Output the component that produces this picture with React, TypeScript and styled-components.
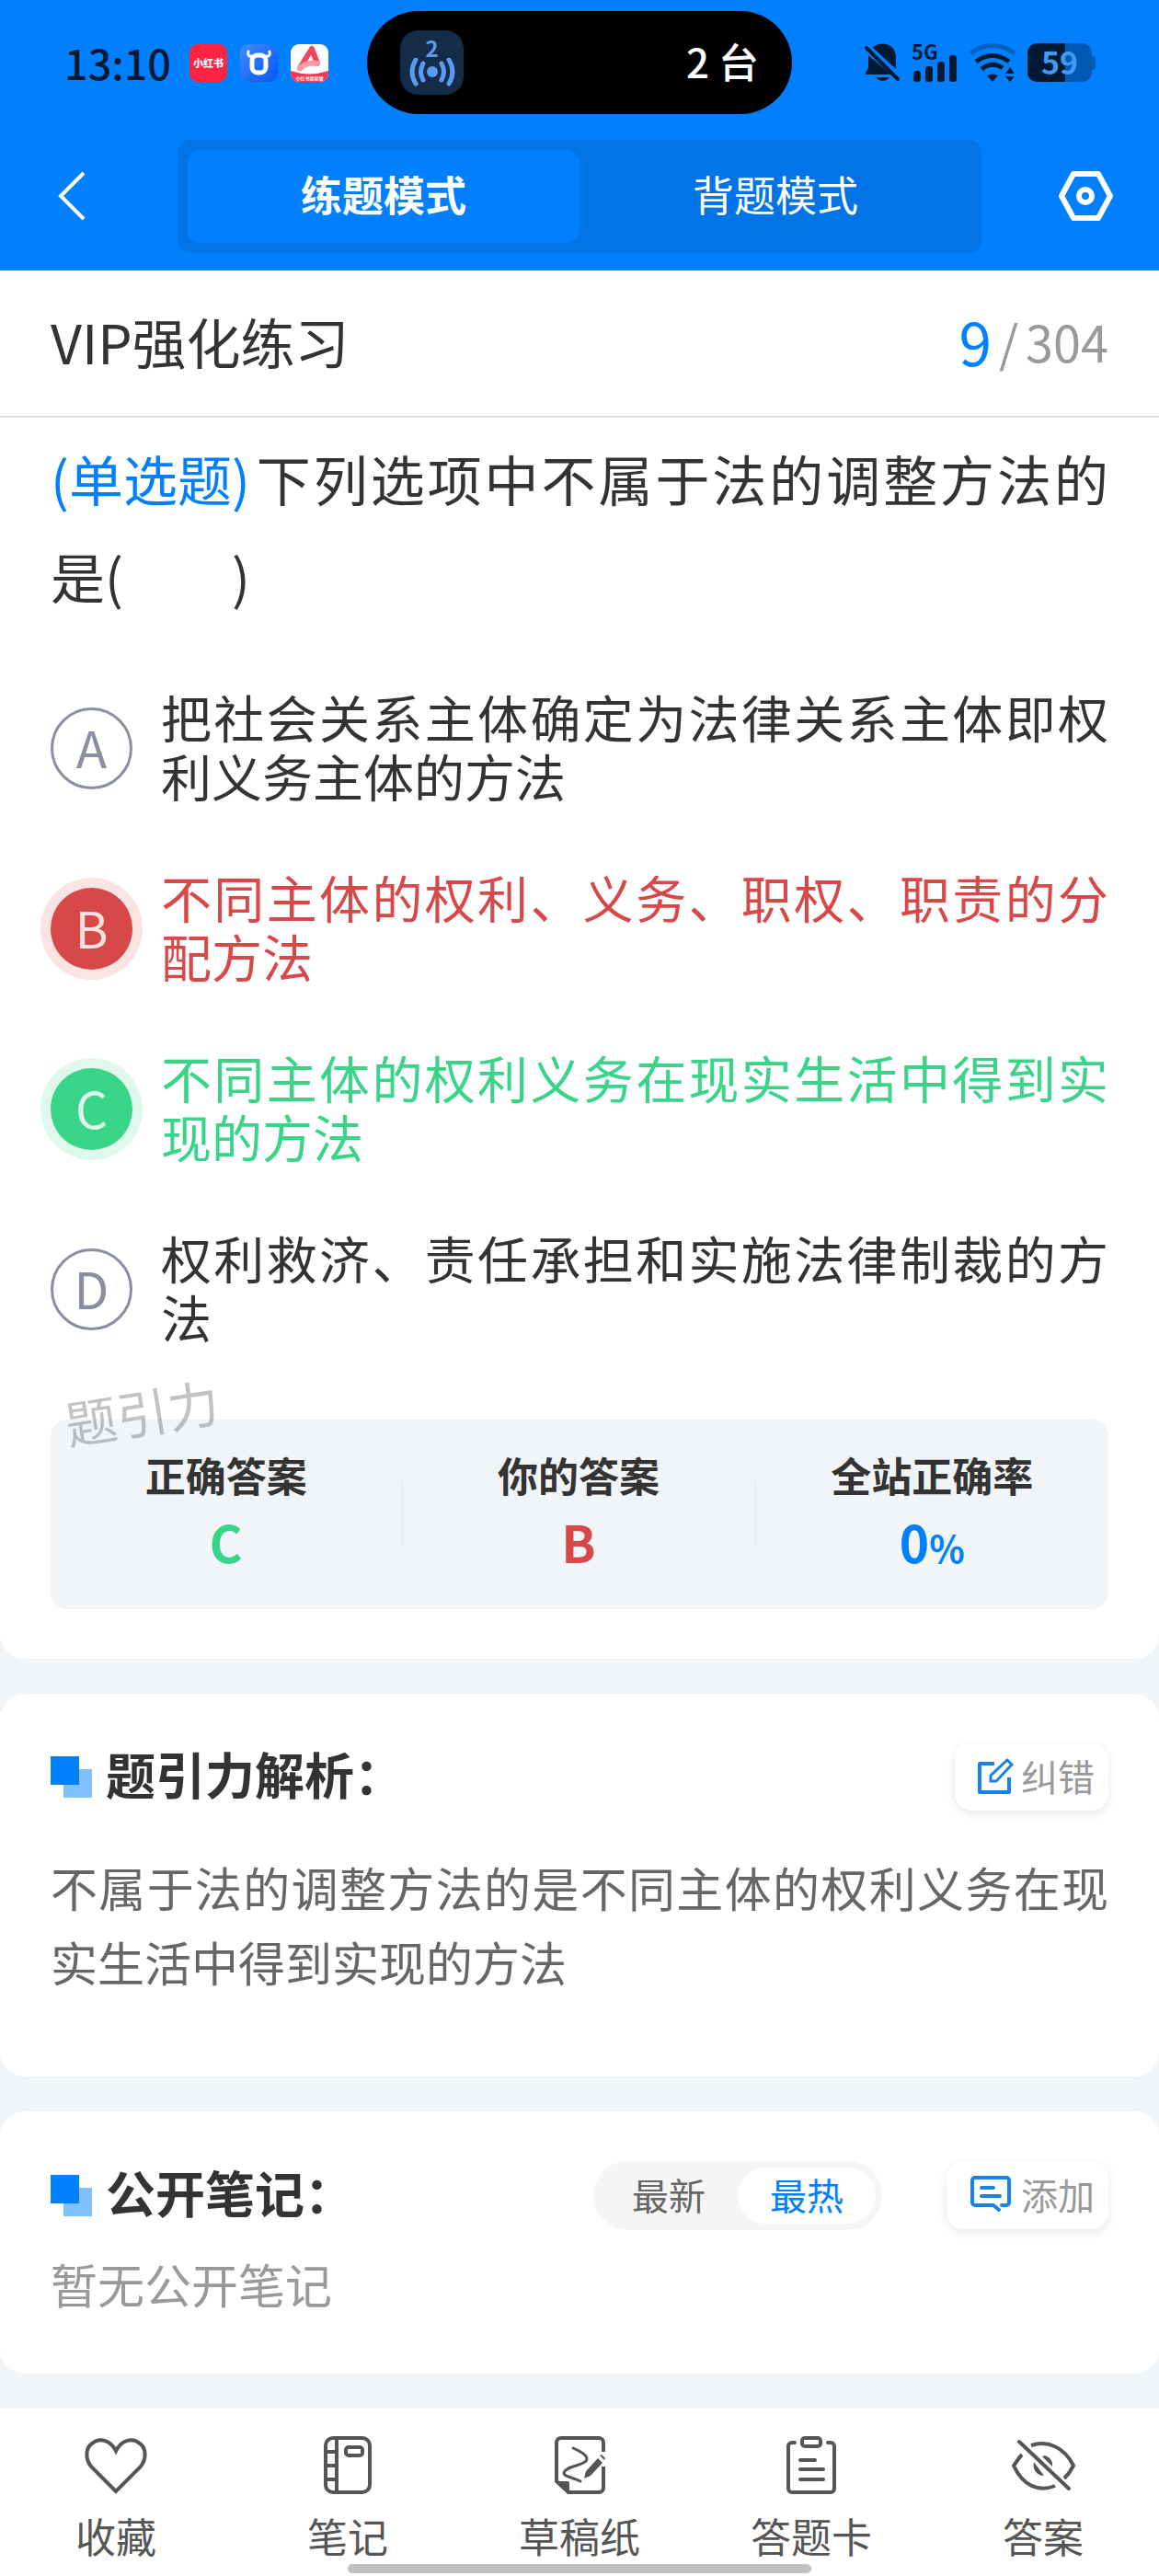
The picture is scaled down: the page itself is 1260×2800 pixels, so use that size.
import React, { useState } from "react";
import styled, { createGlobalStyle, css } from "styled-components";

const font = `"Noto Sans CJK SC", "Noto Sans", sans-serif`;
const blue = "#0080ff";
const red = "#d94848";
const green = "#38d488";
const ink = "#333333";
const panel = "#f1f5f8";

const GlobalStyle = createGlobalStyle`
  *, *::before, *::after { box-sizing: border-box; }
  body { margin: 0; background: ${panel}; font-family: ${font}; color: ${ink}; }
  button { font: inherit; color: inherit; border: 0; padding: 0; background: none; cursor: pointer; }
  h1, h2, p, dl, dd, dt, fieldset { margin: 0; padding: 0; border: 0; min-width: 0; }
  svg { display: block; flex: none; }
`;

const Page = styled.div`
  display: flex;
  flex-direction: column;
  min-height: 100vh;
`;

const Header = styled.header`
  background: ${blue};
  padding-bottom: 19px;
`;

const StatusBar = styled.div`
  display: grid;
  grid-template-columns: 1fr 462px 1fr;
  align-items: center;
  height: 136px;
  margin-bottom: 16px;
`;

const StatusLeft = styled.div`
  display: flex;
  align-items: center;
  gap: 14px;
  padding-left: 70px;
`;

const Clock = styled.time`
  font-size: 45px;
  line-height: 56px;
  font-weight: 500;
  color: #001a33;
  margin-right: 6px;
`;

const AppIcon = styled.span<{ $bg: string }>`
  display: flex;
  align-items: center;
  justify-content: center;
  width: 41px;
  height: 41px;
  border-radius: 9px;
  overflow: hidden;
  background: ${(p) => p.$bg};
  color: #fff;
  font-size: 11px;
  line-height: 16px;
  font-weight: 900;
  white-space: nowrap;
`;

const Island = styled.div`
  display: flex;
  align-items: center;
  justify-content: space-between;
  height: 112px;
  padding: 0 36px;
  border-radius: 56px;
  background: #000;
  color: #fff;
  font-size: 44px;
  line-height: 56px;
  font-weight: 500;
`;

const DeviceCount = styled.span`
  padding-bottom: 4px;
`;

const Hotspot = styled.span`
  display: flex;
  flex-direction: column;
  align-items: center;
  width: 69px;
  height: 70px;
  padding-top: 8px;
  border-radius: 20px;
  background: #152c48;
  color: #5a9bf2;
  font-size: 24px;
  line-height: 22px;
  font-weight: 700;
`;

const StatusRight = styled.div`
  display: flex;
  align-items: center;
  justify-content: flex-end;
  gap: 12px;
  padding-right: 69px;
`;

const Signal = styled.span`
  display: flex;
  flex-direction: column;
  width: 50px;
  height: 42px;
  color: #001a33;
  font-size: 22px;
  line-height: 16px;
  font-weight: 700;
`;

const Bars = styled.svg`
  margin-top: -4px;
`;

const Battery = styled.span`
  display: flex;
  align-items: center;
`;

const BatteryBody = styled.span`
  display: flex;
  align-items: center;
  justify-content: center;
  width: 70px;
  height: 42px;
  padding-bottom: 2px;
  border-radius: 10px;
  background: linear-gradient(90deg, #001a33 59%, #005ab3 59%);
  color: #3e99f7;
  font-size: 34px;
  line-height: 40px;
  font-weight: 700;
`;

const BatteryNub = styled.span`
  width: 4px;
  height: 15px;
  border-radius: 0 4px 4px 0;
  background: #005ab3;
`;

const TopNav = styled.nav`
  display: grid;
  grid-template-columns: 193px 1fr 193px;
  align-items: center;
`;

const IconButton = styled.button<{ $side: "left" | "right" }>`
  display: flex;
  justify-content: ${(p) => (p.$side === "left" ? "flex-start" : "flex-end")};
  padding: ${(p) => (p.$side === "left" ? "0 0 2px 60px" : "0 46px 2px 0")};
`;

const Segments = styled.div`
  display: flex;
  height: 123px;
  padding: 11px;
  border-radius: 14px;
  background: #0073e6;
`;

const Segment = styled.button<{ $active: boolean }>`
  flex: 1;
  padding-bottom: 6px;
  border-radius: 14px;
  color: #fff;
  font-size: 45px;
  line-height: 56px;
  ${(p) => p.$active && css`background: ${blue}; font-weight: 700;`}
`;

const TitleRow = styled.div`
  display: flex;
  align-items: center;
  justify-content: space-between;
  height: 160px;
  padding: 0 55px 6px;
  background: #fff;
  border-bottom: 2px solid #dcdcdc;
`;

const Title = styled.h1`
  font-size: 59px;
  line-height: 81px;
  font-weight: 400;
`;

const Progress = styled.p`
  display: flex;
  align-items: center;
  gap: 8px;
  font-size: 54px;
  line-height: 81px;
  color: #999;
`;

const Current = styled.span`
  font-size: 64px;
  color: ${blue};
`;

const Main = styled.main`
  display: flex;
  flex-direction: column;
  gap: 38px;
  flex: 1;
  padding-bottom: 38px;
`;

const Card = styled.section<{ $first?: boolean }>`
  padding: ${(p) => (p.$first ? "13px 55px 54px" : "54px 55px 55px")};
  border-radius: ${(p) => (p.$first ? "0 0 27px 27px" : "27px")};
  background: #fff;
`;

const Question = styled.p`
  font-size: 59px;
  line-height: 106px;
  text-align: justify;
`;

const Kind = styled.span`
  display: inline-block;
  margin-right: 4px;
  color: ${blue};
`;

const Options = styled.fieldset`
  display: flex;
  flex-direction: column;
  gap: 62px;
  margin: 67px 0 75px;
`;

type Tone = "plain" | "wrong" | "right";
const toneColor: Record<Tone, string> = { plain: ink, wrong: red, right: green };

const Option = styled.label<{ $tone: Tone }>`
  display: flex;
  align-items: center;
  gap: 31px;
  color: ${(p) => toneColor[p.$tone]};
  font-size: 55px;
  line-height: 64px;
  cursor: pointer;
`;

const Radio = styled.input`
  position: absolute;
  opacity: 0;
`;

const Letter = styled.span<{ $tone: Tone }>`
  flex: none;
  width: 89px;
  height: 89px;
  border-radius: 50%;
  text-align: center;
  line-height: 85px;
  ${(p) =>
    p.$tone === "plain"
      ? css`border: 3px solid #8a8fa0; color: #8a8fa0; line-height: 79px;`
      : css`
          background: ${toneColor[p.$tone]};
          color: ${p.$tone === "wrong" ? "#fbe0e0" : "#dcf8ea"};
          box-shadow: 0 0 0 11px ${p.$tone === "wrong" ? "#fae3e3" : "#e0f8ec"};
        `}
`;

const OptionText = styled.span`
  flex: 1;
  padding-bottom: 6px;
  text-align: justify;
`;

const ResultWrap = styled.div`
  position: relative;
`;

const Watermark = styled.span`
  position: absolute;
  left: 15px;
  top: -50px;
  font-size: 56px;
  line-height: 81px;
  color: rgba(120, 120, 120, 0.45);
  transform: rotate(-9deg);
  pointer-events: none;
`;

const Results = styled.dl`
  display: grid;
  grid-template-columns: repeat(3, 1fr);
  align-items: center;
  height: 206px;
  border-radius: 18px;
  background: ${panel};
`;

const Result = styled.div`
  display: flex;
  flex-direction: column;
  align-items: center;
  justify-content: center;
  height: 73px;
  font-weight: 700;
  &:not(:last-child) { border-right: 2px solid #e9edf0; }
`;

const ResultLabel = styled.dt`
  font-size: 44px;
  line-height: 64px;
`;

const ResultValue = styled.dd<{ $color: string }>`
  padding-bottom: 5px;
  font-size: 55px;
  line-height: 81px;
  color: ${(p) => p.$color};
`;

const Percent = styled.small`
  font-size: 40px;
  line-height: 40px;
`;

const CardHead = styled.div`
  display: flex;
  align-items: center;
  min-height: 73px;
`;

const Squares = styled.span`
  width: 45px;
  height: 45px;
  margin-right: 15px;
  background:
    linear-gradient(${blue}, ${blue}) 0 0 / 31px 31px no-repeat,
    linear-gradient(#80bfff, #80bfff) 100% 100% / 31px 31px no-repeat;
`;

const CardTitle = styled.h2`
  flex: 1;
  padding-bottom: 8px;
  font-size: 54px;
  line-height: 64px;
  font-weight: 700;
`;

const SmallButton = styled.button`
  display: flex;
  align-items: center;
  gap: 8px;
  height: 73px;
  padding: 0 15px 4px 25px;
  border-radius: 18px;
  background: #fff;
  box-shadow: 0 3px 11px rgba(0, 0, 0, 0.1);
  color: #999;
  font-size: 40px;
  line-height: 56px;
`;

const SortToggle = styled.div`
  display: flex;
  height: 75px;
  margin-right: 70px;
  padding: 7px;
  border-radius: 38px;
  background: #f5f5f5;
`;

const SortButton = styled.button<{ $active: boolean }>`
  width: 150px;
  padding-bottom: 4px;
  border-radius: 31px;
  background: ${(p) => (p.$active ? "#fff" : "transparent")};
  color: ${(p) => (p.$active ? blue : "#666")};
  font-size: 40px;
  line-height: 56px;
`;

const Explanation = styled.p`
  padding: 43px 0 29px;
  font-size: 51px;
  line-height: 81px;
  color: #666;
  text-align: justify;
`;

const Empty = styled.p`
  padding: 18px 0 2px;
  font-size: 51px;
  line-height: 81px;
  color: #999;
`;

const TabBar = styled.nav`
  display: grid;
  grid-template-columns: repeat(5, 1fr);
  height: 182px;
  background: #fff;
`;

const Tab = styled.button`
  display: flex;
  flex-direction: column;
  align-items: center;
  gap: 14px;
  padding-top: 26px;
  color: #555;
  font-size: 44px;
  line-height: 56px;
`;

const HomeIndicator = styled.span`
  position: absolute;
  left: 30%;
  right: 30%;
  bottom: 3px;
  height: 10px;
  border-radius: 5px;
  background: #c2c2c2;
`;

const Footer = styled.footer`
  position: relative;
`;

const line = { fill: "none", stroke: "currentColor", strokeWidth: 4, strokeLinecap: "round", strokeLinejoin: "round" } as const;

const HeartIcon = () => (
  <svg width="70" height="70" viewBox="0 0 70 70" {...line} strokeLinecap="butt">
    <path d="M35 64 9 38C1 29 2 17 9 12c8-7 20-4 26 8 6-12 18-15 26-8 7 5 8 17 0 26Z" strokeLinejoin="miter" />
  </svg>
);

const NotebookIcon = () => (
  <svg width="70" height="70" viewBox="0 0 70 70" {...line} strokeLinecap="butt">
    <rect x="11" y="6" width="48" height="59" rx="8" />
    <path d="M23 6v59M11 21h12M11 36h12M11 51h12" />
    <rect x="33" y="16" width="18" height="9" rx="3" />
  </svg>
);

const DraftIcon = () => (
  <svg width="70" height="70" viewBox="0 0 70 70" {...line}>
    <path d="M61 21V11a5 5 0 0 0-5-5H15a5 5 0 0 0-5 5v42l13 12h33a5 5 0 0 0 5-5V37" strokeLinecap="butt" />
    <path d="M9 53h13q2 0 2 2v11h-2L9 54Z" fill="currentColor" stroke="none" />
    <path d="M28 17c9 4 18 9 14 14s-23 6-24 13c0 4 10 5 18 9" strokeWidth="3" />
    <path d="m55 28 5 5-13 14-7 3 2-8Z" fill="currentColor" stroke="none" />
    <path d="m57 25 2-1 4 4-1 2Z" fill="currentColor" stroke="none" />
  </svg>
);

const ClipboardIcon = () => (
  <svg width="70" height="70" viewBox="0 0 70 70" {...line}>
    <path d="M17 11h-3a4 4 0 0 0-4 4v46a4 4 0 0 0 4 4h42a4 4 0 0 0 4-4V15a4 4 0 0 0-4-4h-3" />
    <rect x="25" y="6" width="20" height="9" rx="3" />
    <path d="M23 30h16M23 40h25M23 51h25" />
  </svg>
);

const EyeOffIcon = () => (
  <svg width="70" height="70" viewBox="0 0 70 70" {...line} strokeLinecap="butt">
    <path d="M22 14c18-6 36 2 46 22-3 6-6 10-10 14M12 24c-3 3-5 7-9 12 10 22 27 29 45 22" />
    <path d="M37 25c6 2 9 7 8 12L34 26ZM25 32c-2 8 3 15 11 15Z" fill="currentColor" stroke="none" />
    <path d="M9 10 63 61" strokeLinecap="round" />
  </svg>
);

const EditIcon = () => (
  <svg width="39" height="40" viewBox="0 0 39 40" fill="none" stroke="#1a80ea" strokeWidth="4">
    <path d="M18 7H2v31h32V22" strokeLinejoin="round" />
    <path d="m32 3 5 5-17 18h-6v-6Z" strokeWidth="3" />
  </svg>
);

const NoteIcon = () => (
  <svg width="48" height="40" viewBox="0 0 48 40" fill="none" stroke="#1a80ea" strokeWidth="4" strokeLinecap="round" strokeLinejoin="round">
    <path d="m32 37-6-5H6a3 3 0 0 1-3-3V5a3 3 0 0 1 3-3h34a3 3 0 0 1 3 3v24a3 3 0 0 1-3 3h-5" />
    <path d="M13 13h13M13 22h20" />
  </svg>
);

const tabs = [
  { label: "收藏", Icon: HeartIcon },
  { label: "笔记", Icon: NotebookIcon },
  { label: "草稿纸", Icon: DraftIcon },
  { label: "答题卡", Icon: ClipboardIcon },
  { label: "答案", Icon: EyeOffIcon },
];

const options: { key: string; tone: Tone; text: string }[] = [
  { key: "A", tone: "plain", text: "把社会关系主体确定为法律关系主体即权利义务主体的方法" },
  { key: "B", tone: "wrong", text: "不同主体的权利、义务、职权、职责的分配方法" },
  { key: "C", tone: "right", text: "不同主体的权利义务在现实生活中得到实现的方法" },
  { key: "D", tone: "plain", text: "权利救济、责任承担和实施法律制裁的方法" },
];

const modes = ["练题模式", "背题模式"];
const sorts = ["最新", "最热"];

export default function App() {
  const [mode, setMode] = useState(0);
  const [sort, setSort] = useState(1);

  return (
    <Page lang="zh-CN">
      <GlobalStyle />
      <Header>
        <StatusBar>
          <StatusLeft>
            <Clock>13:10</Clock>
            <AppIcon $bg="#ff2442">小红书</AppIcon>
            <AppIcon $bg="linear-gradient(135deg, #3f8bff, #0a55f0)">
              <svg width="41" height="41" viewBox="0 0 41 41" fill="none" stroke="#fff">
                <rect x="13" y="12" width="15" height="19" rx="6" strokeWidth="5" />
                <path d="M13 13c-4 1-5-2-4-5M28 13c4 1 5-2 4-5" strokeWidth="3" strokeLinecap="round" />
              </svg>
            </AppIcon>
            <AppIcon $bg="#fff">
              <svg width="41" height="41" viewBox="0 0 41 41" fill="none">
                <path d="M0 29q20 7 41 0v12H0Z" fill="#f5364f" />
                <path d="M10 26 23 5l6 16" stroke="#f2455a" strokeWidth="6" strokeLinecap="round" strokeLinejoin="round" />
                <path d="M10 26q8-7 19-5" stroke="#ff9aa2" strokeWidth="6" strokeLinecap="round" />
                <text x="20.5" y="39" textAnchor="middle" fontSize="5" fontWeight="700" fill="#fff">小红书商家版</text>
              </svg>
            </AppIcon>
          </StatusLeft>
          <Island>
            <Hotspot>
              2
              <svg width="50" height="32" viewBox="0 0 50 32" fill="none" stroke="currentColor" strokeWidth="5" strokeLinecap="round">
                <circle cx="25" cy="15" r="6" fill="currentColor" stroke="none" />
                <path d="M15 6q-5 9 0 18M7 2q-8 13 0 26M35 6q5 9 0 18M43 2q8 13 0 26" />
              </svg>
            </Hotspot>
            <DeviceCount>2 台</DeviceCount>
          </Island>
          <StatusRight>
            <svg width="40" height="42" viewBox="0 0 40 42" fill="#001a33">
              <path d="M10 4C20-3 34 1 35 14v14L10 5ZM5 13l25 21H2c-1-3 3-4 3-9ZM13 37h15q-7 8-15 0Z" />
              <path d="m3 5 34 34" stroke="#001a33" strokeWidth="4" strokeLinecap="round" />
            </svg>
            <Signal>
              5G
              <Bars width="50" height="30" viewBox="0 0 50 30" fill="#001a33">
                <rect x="2" y="18" width="8" height="12" rx="3" />
                <rect x="15" y="13" width="8" height="17" rx="3" />
                <rect x="28" y="8" width="8" height="22" rx="3" />
                <rect x="41" y="1" width="8" height="29" rx="3" />
              </Bars>
            </Signal>
            <svg width="52" height="42" viewBox="0 0 52 42" fill="none" stroke="#001a33" strokeWidth="5">
              <path d="M2 11Q26-6 50 11" stroke="#005fbf" />
              <path d="M8 20q18-13 36 0M14 28q12-9 23-1" />
              <path d="M20 35q6-3 12 0l-6 7ZM45 26l5 7H40ZM40 36h10l-5 6Z" fill="#001a33" stroke="none" />
            </svg>
            <Battery>
              <BatteryBody>59</BatteryBody>
              <BatteryNub />
            </Battery>
          </StatusRight>
        </StatusBar>
        <TopNav>
          <IconButton $side="left" aria-label="返回">
            <svg width="36" height="56" viewBox="0 0 36 56" fill="none" stroke="#fff" strokeWidth="4">
              <path d="M31 3 6 28l25 25" />
            </svg>
          </IconButton>
          <Segments>
            {modes.map((m, i) => (
              <Segment key={m} $active={mode === i} aria-pressed={mode === i} onClick={() => setMode(i)}>
                {m}
              </Segment>
            ))}
          </Segments>
          <IconButton $side="right" aria-label="设置">
            <svg width="66" height="60" viewBox="0 0 66 60" fill="none" stroke="#fff" strokeWidth="6" strokeLinejoin="round">
              <path d="M19 6h27l13 24-13 24H19L6 30Z" />
              <circle cx="32" cy="30" r="7" />
            </svg>
          </IconButton>
        </TopNav>
      </Header>

      <TitleRow>
        <Title>VIP强化练习</Title>
        <Progress>
          <Current>9</Current>
          <span>/</span>
          <span>304</span>
        </Progress>
      </TitleRow>

      <Main>
        <Card $first>
          <Question>
            <Kind>(单选题)</Kind>下列选项中不属于法的调整方法的是(　　)
          </Question>
          <Options>
            {options.map((o) => (
              <Option key={o.key} $tone={o.tone}>
                <Radio type="radio" name="answer" value={o.key} defaultChecked={o.tone === "wrong"} />
                <Letter $tone={o.tone}>{o.key}</Letter>
                <OptionText>{o.text}</OptionText>
              </Option>
            ))}
          </Options>
          <ResultWrap>
            <Results>
              <Result>
                <ResultLabel>正确答案</ResultLabel>
                <ResultValue $color={green}>C</ResultValue>
              </Result>
              <Result>
                <ResultLabel>你的答案</ResultLabel>
                <ResultValue $color={red}>B</ResultValue>
              </Result>
              <Result>
                <ResultLabel>全站正确率</ResultLabel>
                <ResultValue $color={blue}>
                  0<Percent>%</Percent>
                </ResultValue>
              </Result>
            </Results>
            <Watermark>题引力</Watermark>
          </ResultWrap>
        </Card>

        <Card>
          <CardHead>
            <Squares />
            <CardTitle>题引力解析：</CardTitle>
            <SmallButton>
              <EditIcon />
              纠错
            </SmallButton>
          </CardHead>
          <Explanation>不属于法的调整方法的是不同主体的权利义务在现实生活中得到实现的方法</Explanation>
        </Card>

        <Card>
          <CardHead>
            <Squares />
            <CardTitle>公开笔记：</CardTitle>
            <SortToggle>
              {sorts.map((s, i) => (
                <SortButton key={s} $active={sort === i} aria-pressed={sort === i} onClick={() => setSort(i)}>
                  {s}
                </SortButton>
              ))}
            </SortToggle>
            <SmallButton>
              <NoteIcon />
              添加
            </SmallButton>
          </CardHead>
          <Empty>暂无公开笔记</Empty>
        </Card>
      </Main>

      <Footer>
        <TabBar>
          {tabs.map(({ label, Icon }) => (
            <Tab key={label}>
              <Icon />
              {label}
            </Tab>
          ))}
        </TabBar>
        <HomeIndicator />
      </Footer>
    </Page>
  );
}
